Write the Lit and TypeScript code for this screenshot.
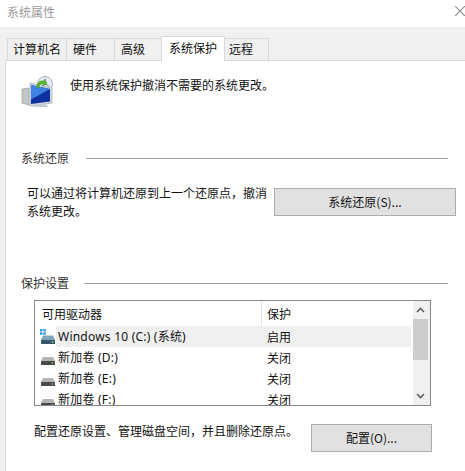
import { LitElement, html, css, svg } from "lit";
import { customElement } from "lit/decorators.js";

const diskIcon = (win: boolean) => html`<svg class="disk" width="16" height="16" viewBox="0 0 16 16">
  ${win ? svg`<g fill="#2d9be8"><rect x="0" y="0" width="2.5" height="2.5"/><rect x="3.3" y="0" width="2.5" height="2.5"/><rect x="0" y="3.3" width="2.5" height="2.5"/><rect x="3.3" y="3.3" width="2.5" height="2.5"/></g>` : ""}
  <path d="M3 ${win ? 6.5 : 7}h10l2 ${win ? 4.5 : 4}H1z" fill="${win ? "#7fa6bd" : "#b4b4b4"}"/>
  <rect x="1" y="11" width="14" height="4" rx=".6" fill="${win ? "#35566c" : "#4a4a4a"}"/>
  <rect x="11.5" y="12.5" width="2" height="1" fill="#8ee06a"/>
</svg>`;

const TABS: [string, number, number][] = [
  ["计算机名", 60, 5],
  ["硬件", 48, 6],
  ["高级", 47, 6],
  ["系统保护", 64, 7],
  ["远程", 44, 4],
];

@customElement("app-root")
export class AppRoot extends LitElement {
  static styles = css`
    :host {
      display: block;
      width: 465px;
      height: 471px;
      overflow: hidden;
      background: #fff;
      font-family: "Noto Sans CJK SC", "Liberation Sans", sans-serif;
      font-size: 12px;
      line-height: 16px;
      color: #111;
    }
    .title {
      height: 27px; padding: 4px 0 0 7px; box-sizing: border-box; color: #999;
      display: flex; justify-content: space-between; align-items: flex-start;
    }
    .title svg { margin-top: 2px; flex: none; }
    .body { background: #f0f0f0; height: 444px; padding: 9px 0 0 5px; box-sizing: border-box; }
    .tabs { display: flex; align-items: flex-end; height: 24px; padding-left: 2px; position: relative; z-index: 1; }
    .tab {
      height: 22px; box-sizing: border-box; border: 1px solid #d9d9d9; border-bottom: none; border-left: none;
      line-height: 20px; background: #f0f0f0;
    }
    .tab:first-child { border-left: 1px solid #d9d9d9; }
    .tab.active { height: 25px; margin-bottom: -1px; background: #fff; border-left: 1px solid #d9d9d9; margin-left: -1px; line-height: 21px; }
    .panel {
      background: #fff; border-left: 1px solid #d9d9d9; border-top: 1px solid #d9d9d9;
      height: 411px; box-sizing: border-box; padding: 13px 0 0 15px;
    }
    .intro { display: flex; gap: 16px; align-items: flex-start; height: 76px; margin-left: -1px; }
    .intro span { margin-top: 3px; }
    .legend { display: flex; align-items: center; gap: 17px; width: 427px; color: #333; }
    .legend.second { gap: 15px; }
    .legend i { flex: 1; height: 1px; background: #a0a0a0; }
    .restore { display: flex; margin-top: 18px; padding-left: 6px; height: 91px; }
    .restore p { margin: 0; width: 241px; line-height: 18px; }
    .btn {
      box-sizing: border-box; height: 28px; background: #e1e1e1; border: 1px solid #adadad;
      display: flex; align-items: center; justify-content: center;
    }
    .btn.big { width: 182px; margin: 4px 0 0 6px; }
    .btn.small { width: 121px; margin-top: 1px; }
    .list {
      margin: 9px 0 0 13px; width: 397px; height: 106px; box-sizing: border-box;
      border: 1px solid #828790; display: flex; overflow: hidden;
    }
    .rows { flex: 1; min-width: 0; overflow: hidden; }
    .row { display: grid; grid-template-columns: 226px 1fr; height: 21px; align-items: center; }
    .row.head { height: 25px; }
    .row.head .c2 { border-left: 1px solid #e5e5e5; padding-left: 5px; height: 100%; display: flex; align-items: center; }
    .row.head .c1 { padding-left: 7px; }
    .row .name { display: flex; align-items: center; padding-left: 5px; height: 100%; letter-spacing: .22px; font-family: "Noto Sans", "Noto Sans CJK SC", sans-serif; }
    .row .name span { padding-left: 2px; }
    .row .state { padding-left: 6px; height: 100%; display: flex; align-items: center; }
    .row.sel .name span, .row.sel .state { background: #f0f0f0; height: 100%; display: flex; align-items: center; }
    .row.sel .name span { flex: 1; }
    .disk { flex: none; }
    .scroll { width: 17px; background: #f0f0f0; margin-left: 2px; padding-right: 2px; box-sizing: border-box; display: flex; flex-direction: column; }
    .arrow { height: 18px; display: flex; align-items: center; justify-content: center; }
    .thumb { height: 41px; background: #cdcdcd; }
    .spacer { flex: 1; }
    .config { display: flex; align-items: flex-start; margin-top: 17px; padding-left: 13px; }
    .config p { margin: 0; width: 277px; }
  `;

  private row(name: string, state: string, win = false, sel = false) {
    return html`<div class="row ${sel ? "sel" : ""}">
      <div class="name">${diskIcon(win)}<span>${name}</span></div>
      <div class="state">${state}</div>
    </div>`;
  }

  render() {
    return html`
      <div class="title">
        <span>系统属性</span>
        <svg width="10" height="10" viewBox="0 0 10 10"><path d="M0 0l10 10M10 0L0 10" stroke="#8a8a8a" stroke-width="1.1" fill="none"/></svg>
      </div>
      <div class="body">
        <div class="tabs">
          ${TABS.map(([t, w, p]) => html`<div class="tab ${t === "系统保护" ? "active" : ""}" style="width:${w}px;padding-left:${p}px">${t}</div>`)}
        </div>
        <div class="panel">
          <div class="intro">
            <svg width="34" height="33" viewBox="0 0 34 33">
              <circle cx="25" cy="10" r="7.500" fill="#e6ebf1" stroke="#a7b6c6"/>
              <path d="M25 5v5l4 2" stroke="#7d8fa3" fill="none"/>
              <path d="M2 15l7-1v17l-7-2z" fill="#c3c8cc" stroke="#8d9398" stroke-width=".6"/>
              <path d="M10 9l22 5v15l-22 3z" fill="#d4dade" stroke="#a9b1b8" stroke-width=".8"/>
              <path d="M11 11l19 4v12.500l-19 2.500z" fill="#0e2fa0"/>
              <path d="M11 11l19 4-19 10.500z" fill="#3d82e2"/>
              <path d="M14 31l12-1 3 3H13z" fill="#c7ccd1"/>
              <path d="M17 14c-1-5 3-8 7-7l1-2 2 5-5 2 1-2c-2-1-4 1-4 4z" fill="#58b52f" stroke="#3f8f22" stroke-width=".4"/>
            </svg>
            <span>使用系统保护撤消不需要的系统更改。</span>
          </div>
          <div class="legend"><span>系统还原</span><i></i></div>
          <div class="restore">
            <p>可以通过将计算机还原到上一个还原点，撤消系统更改。</p>
            <div class="btn big">系统还原(S)...</div>
          </div>
          <div class="legend second"><span>保护设置</span><i></i></div>
          <div class="list">
            <div class="rows">
              <div class="row head"><div class="c1">可用驱动器</div><div class="c2">保护</div></div>
              ${this.row("Windows 10 (C:) (系统)", "启用", true, true)}
              ${this.row("新加卷 (D:)", "关闭")}
              ${this.row("新加卷 (E:)", "关闭")}
              ${this.row("新加卷 (F:)", "关闭")}
            </div>
            <div class="scroll">
              <div class="arrow"><svg width="9" height="6" viewBox="0 0 9 6"><path d="M1 5l3.500-3.500L8 5" fill="none" stroke="#606060" stroke-width="1.6"/></svg></div>
              <div class="thumb"></div>
              <div class="spacer"></div>
              <div class="arrow"><svg width="9" height="6" viewBox="0 0 9 6"><path d="M1 1l3.500 3.500L8 1" fill="none" stroke="#606060" stroke-width="1.6"/></svg></div>
            </div>
          </div>
          <div class="config">
            <p>配置还原设置、管理磁盘空间，并且删除还原点。</p>
            <div class="btn small">配置(O)...</div>
          </div>
        </div>
      </div>
    `;
  }
}
